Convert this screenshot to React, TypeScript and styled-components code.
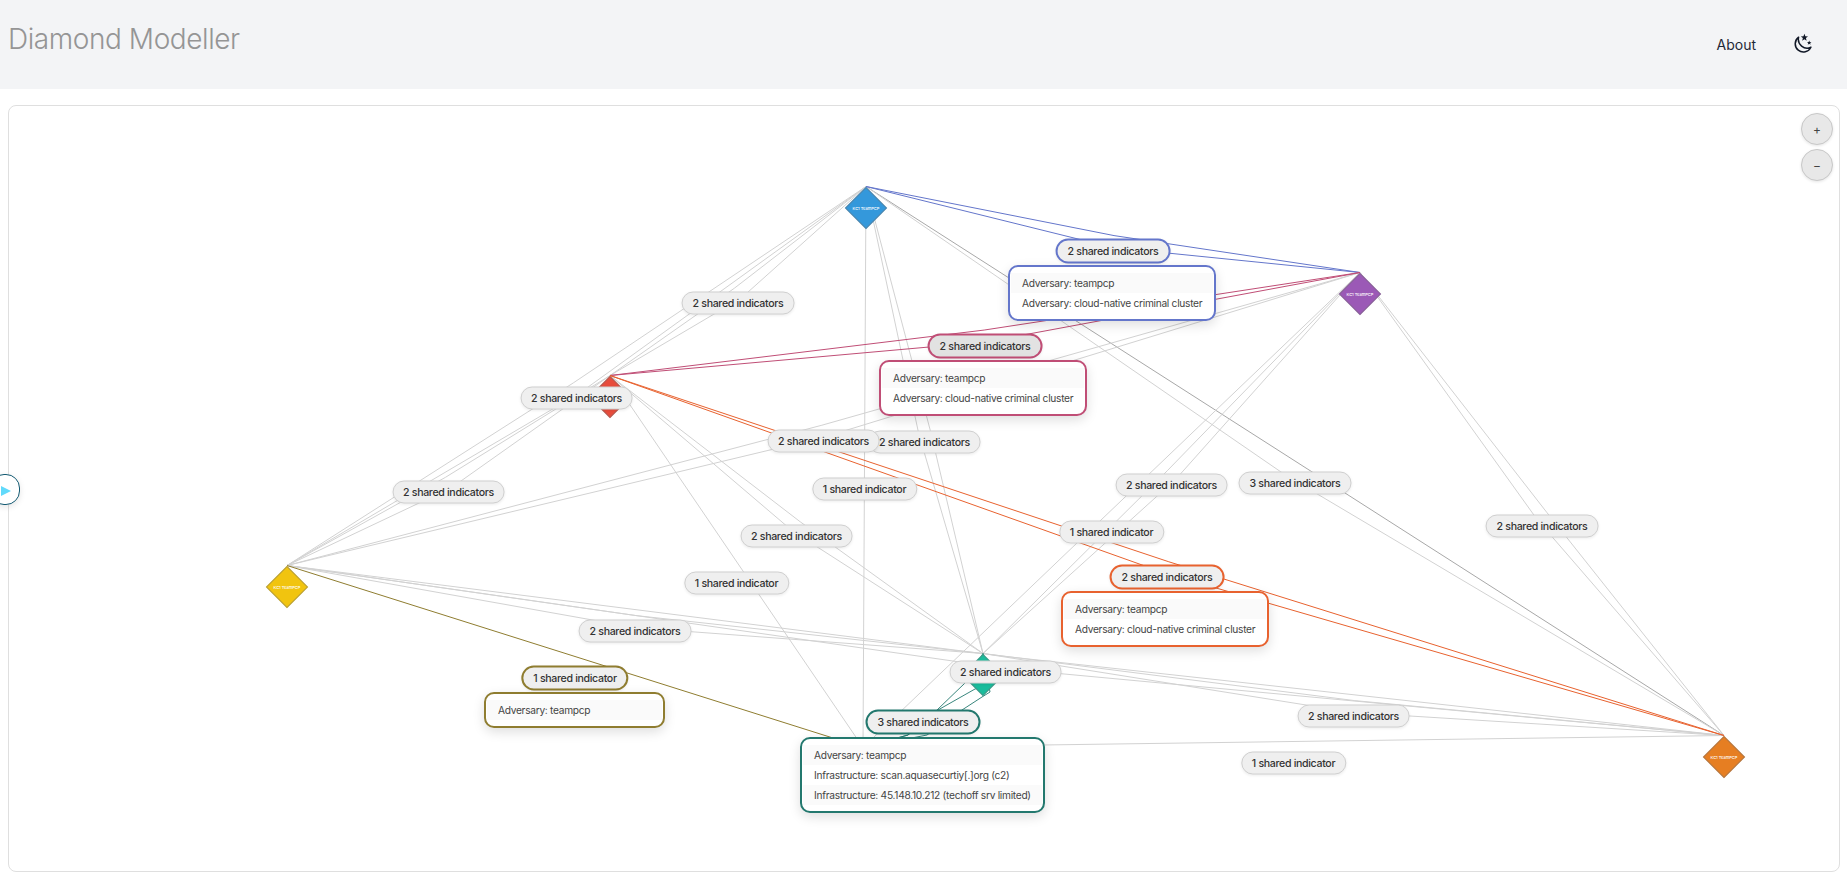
import React from "react";
import styled, { createGlobalStyle } from "styled-components";

const ORIGIN = { x: 8, y: 105 };
const HALF = 21.5;

type Pt = { x: number; y: number };
type NodeDef = { id: string; x: number; y: number; color: string };
type EdgeDef = { from: string; to: string; count: number; tone?: string; rows?: string[]; card?: Pt };

const nodes: NodeDef[] = [
  { id: "x", x: 863, y: 769, color: "#2ecc71" },
  { id: "blue", x: 866, y: 208, color: "#3498db" },
  { id: "purple", x: 1360, y: 294, color: "#9b59b6" },
  { id: "red", x: 610, y: 397, color: "#e74c3c" },
  { id: "yellow", x: 287, y: 587, color: "#f1c40f" },
  { id: "green", x: 983, y: 675, color: "#1abc9c" },
  { id: "orange", x: 1724, y: 757, color: "#e67e22" },
];

const T = "Adversary: teampcp";
const C = "Adversary: cloud-native criminal cluster";

const edges: EdgeDef[] = [
  { from: "blue", to: "red", count: 2 },
  { from: "blue", to: "yellow", count: 2 },
  { from: "blue", to: "green", count: 2 },
  { from: "blue", to: "orange", count: 3 },
  { from: "blue", to: "x", count: 1 },
  { from: "purple", to: "yellow", count: 2 },
  { from: "purple", to: "green", count: 2 },
  { from: "purple", to: "orange", count: 2 },
  { from: "purple", to: "x", count: 1 },
  { from: "red", to: "yellow", count: 2 },
  { from: "red", to: "green", count: 2 },
  { from: "red", to: "x", count: 1 },
  { from: "yellow", to: "green", count: 2 },
  { from: "yellow", to: "orange", count: 2 },
  { from: "green", to: "orange", count: 2 },
  { from: "orange", to: "x", count: 1 },
  { from: "blue", to: "purple", count: 2, tone: "#6476cb", rows: [T, C], card: { x: 1008, y: 265 } },
  { from: "purple", to: "red", count: 2, tone: "#c04e76", rows: [T, C], card: { x: 879, y: 360 } },
  { from: "red", to: "orange", count: 2, tone: "#e8622f", rows: [T, C], card: { x: 1061, y: 591 } },
  { from: "yellow", to: "x", count: 1, tone: "#8f7d30", rows: [T], card: { x: 484, y: 692 } },
  {
    from: "green",
    to: "x",
    count: 3,
    tone: "#23786e",
    rows: [T, "Infrastructure: scan.aquasecurtiy[.]org (c2)", "Infrastructure: 45.148.10.212 (techoff srv limited)"],
    card: { x: 800, y: 737 },
  },
];

const byId = (id: string) => nodes.find((n) => n.id === id)!;
const top = (n: NodeDef): Pt => ({ x: n.x, y: n.y - HALF });

const poly = (pts: Pt[]) => pts.map((p) => `${p.x - ORIGIN.x},${p.y - ORIGIN.y}`).join(" ");

/* Lines of one edge: a single indicator runs straight, several bow apart around a shifted midpoint. */
function linesFor(e: EdgeDef): { pts: Pt[]; stroke: string; width: number }[] {
  const a = top(byId(e.from));
  const b = top(byId(e.to));
  const base = e.tone ?? "#d2d2d2";
  if (e.from === "green" && e.to === "x") {
    return [
      [a, { x: 965, y: 683 }, { x: 937, y: 710 }, { x: 908, y: 735 }, b],
      [a, { x: 992, y: 684 }, { x: 975, y: 689 }, { x: 938, y: 710 }, { x: 908, y: 735 }, b],
      [a, { x: 990, y: 692 }, { x: 982, y: 697 }, { x: 962, y: 710 }, { x: 927, y: 735 }, b],
    ].map((pts) => ({ pts, stroke: base, width: 0.9 }));
  }
  if (e.count === 1) return [{ pts: [a, b], stroke: base, width: 1 }];
  const mx = (a.x + b.x) / 2;
  const my = (a.y + b.y) / 2 + 12;
  const dx = b.x - a.x;
  const dy = b.y - a.y;
  const len = Math.hypot(dx, dy);
  const nx = -dy / len;
  const ny = dx / len;
  if (e.count === 3) {
    return [
      { pts: [a, b], stroke: "#a8a8a8", width: 1 },
      { pts: [a, { x: (a.x + b.x) / 2 + nx * 17, y: (a.y + b.y) / 2 + ny * 17 }, b], stroke: base, width: 1 },
    ];
  }
  return [6, -6].map((k) => ({
    pts: [a, { x: mx + nx * k, y: my + ny * k }, b],
    stroke: base,
    width: 1,
  }));
}

const GlobalStyle = createGlobalStyle`
  html, body { margin: 0; height: 100%; background: #fff; overflow: hidden; }
  body { font-family: Inter, "Noto Sans", "Liberation Sans", sans-serif; }
`;

const Page = styled.div`
  position: relative;
  width: 1847px;
  height: 881px;
  display: flex;
  flex-direction: column;
`;

const Header = styled.header`
  height: 89px;
  flex: none;
  background: #f3f4f6;
  display: flex;
  align-items: flex-start;
  justify-content: space-between;
  padding: 0 35px 0 8px;
  box-sizing: border-box;
`;

const Title = styled.h1`
  margin: 21px 0 0;
  font-size: 28px;
  line-height: 36px;
  font-weight: 300;
  letter-spacing: -0.43px;
  color: #959595;
`;

const Nav = styled.nav`
  display: flex;
  align-items: center;
  gap: 38px;
  height: 86px;
`;

const NavLink = styled.a`
  font-size: 14px;
  font-weight: 400;
  margin-top: 2px;
  color: #1f2937;
`;

const ThemeButton = styled.button`
  border: 0;
  background: none;
  padding: 0;
  display: flex;
  color: #111827;
  margin-top: -1px;
`;

const Main = styled.main`
  flex: 1;
  padding: 16px 7px 9px 8px;
  min-height: 0;
  display: flex;
`;

const SideToggle = styled.button`
  position: absolute;
  left: -10px;
  top: 474px;
  width: 30px;
  height: 31px;
  border-radius: 14px;
  border: 1.5px solid #135a72;
  background: #fff;
  box-shadow: 0 2px 6px rgba(0, 0, 0, 0.1);
  padding: 0;

  &::after {
    content: "";
    position: absolute;
    left: 10px;
    top: 11px;
    border-style: solid;
    border-width: 5.5px 0 5.5px 10px;
    border-color: transparent transparent transparent #61dafb;
  }
`;

const Canvas = styled.section`
  position: relative;
  flex: 1;
  border: 1px solid #dfdfdf;
  border-radius: 8px;
  box-sizing: border-box;
`;

const EdgeLayer = styled.svg`
  position: absolute;
  left: -1px;
  top: -1px;
  width: 1832px;
  height: 767px;
  overflow: hidden;
`;

const Diamond = styled.div.attrs<{ $x: number; $y: number; $fill: string }>((p) => ({
  style: { left: p.$x - ORIGIN.x - 1, top: p.$y - ORIGIN.y - 1, background: p.$fill },
}))<{ $x: number; $y: number; $fill: string }>`
  position: absolute;
  width: 30px;
  height: 30px;
  margin: -15px 0 0 -15px;
  transform: rotate(45deg);
  outline: 1px solid rgba(110, 110, 110, 0.45);
  outline-offset: -1px;
  display: flex;
  align-items: center;
  justify-content: center;
`;

const DiamondLabel = styled.span`
  transform: rotate(-45deg);
  color: #fff;
  font-size: 4px;
  font-weight: 500;
  white-space: nowrap;
`;

const Pill = styled.div.attrs<{ $x: number; $y: number; $tone?: string; $shade?: boolean }>((p) => ({
  style: { left: p.$x - ORIGIN.x - 1, top: p.$y - ORIGIN.y - 1 },
}))<{ $x: number; $y: number; $tone?: string; $shade?: boolean }>`
  position: absolute;
  transform: translate(-50%, -50%);
  box-sizing: border-box;
  height: ${(p) => (p.$tone ? 25 : 23)}px;
  padding: 0 10px;
  border: ${(p) => (p.$tone ? `2px solid ${p.$tone}` : "1px solid #d0d0d0")};
  border-radius: 13px;
  background: ${(p) => (p.$shade ? "#e2e2e2" : "#efefef")};
  box-shadow: 0 1px 3px rgba(0, 0, 0, 0.08);
  color: #333;
  font-size: 10.6px;
  font-weight: 500;
  letter-spacing: -0.33px;
  white-space: nowrap;
  display: flex;
  align-items: center;
`;

const Card = styled.div.attrs<{ $x: number; $y: number; $tone: string }>((p) => ({
  style: { left: p.$x - ORIGIN.x - 1, top: p.$y - ORIGIN.y - 1, borderColor: p.$tone },
}))<{ $x: number; $y: number; $tone: string }>`
  position: absolute;
  box-sizing: border-box;
  min-width: 181px;
  padding: 6px 1px;
  border: 2px solid;
  border-radius: 10px;
  background: #fff;
  box-shadow: 0 4px 12px rgba(0, 0, 0, 0.13);
`;

const CardRow = styled.div`
  height: 20px;
  padding: 0 11px;
  font-size: 10.2px;
  line-height: 21px;
  letter-spacing: -0.29px;
  color: #444;
  white-space: nowrap;

  &:nth-child(odd) {
    background: #fafafa;
  }
`;

const ZoomStack = styled.div`
  position: absolute;
  top: 7px;
  right: 6px;
  display: flex;
  flex-direction: column;
  gap: 4px;
`;

const ZoomButton = styled.button`
  width: 32px;
  height: 32px;
  padding: 0;
  border-radius: 50%;
  border: 1px solid #c8c8c8;
  background: #e8e8e8;
  color: #444;
  font-size: 12px;
  font-family: inherit;
  box-shadow: 0 1px 3px rgba(0, 0, 0, 0.1);
`;

const labelOf = (e: EdgeDef) => `${e.count} shared indicator${e.count > 1 ? "s" : ""}`;

function starPoints(cx: number, cy: number, r: number) {
  return Array.from({ length: 10 }, (_, i) => {
    const rad = i % 2 ? r * 0.42 : r;
    const t = -Math.PI / 2 + (i * Math.PI) / 5;
    return `${cx + rad * Math.cos(t)},${cy + rad * Math.sin(t)}`;
  }).join(" ");
}

const MoonIcon = () => (
  <svg width="18" height="20" viewBox="0 0 18 20" fill="none">
    <path
      d="M4.6 4.2A8.2 8.2 0 1 0 16.9 14.2A8.8 8.8 0 0 1 4.6 4.2Z"
      stroke="currentColor"
      strokeWidth="1.5"
      strokeLinejoin="round"
    />
    <polygon points={starPoints(10.4, 4.6, 3.8)} fill="currentColor" />
    <polygon points={starPoints(15.2, 9.8, 2.4)} fill="currentColor" />
  </svg>
);

export default function App() {
  return (
    <Page>
      <GlobalStyle />
      <Header>
        <Title>Diamond Modeller</Title>
        <Nav>
          <NavLink>About</NavLink>
          <ThemeButton aria-label="Toggle theme">
            <MoonIcon />
          </ThemeButton>
        </Nav>
      </Header>
      <Main>
        <Canvas>
          <EdgeLayer viewBox="0 0 1832 767">
            {edges.flatMap((e, i) =>
              linesFor(e).map((l, j) => (
                <polyline key={`${i}-${j}`} points={poly(l.pts)} fill="none" stroke={l.stroke} strokeWidth={l.width} />
              ))
            )}
          </EdgeLayer>
          {nodes.map((n) => (
            <Diamond key={n.id} $x={n.x} $y={n.y} $fill={n.color}>
              <DiamondLabel>KC1 TeamPCP</DiamondLabel>
            </Diamond>
          ))}
          {edges.map((e) => {
            const a = byId(e.from);
            const b = byId(e.to);
            return (
              <Pill
                key={`${e.from}-${e.to}`}
                $x={(a.x + b.x) / 2}
                $y={(a.y + b.y) / 2}
                $tone={e.tone}
                $shade={e.from === "purple" && e.to === "red"}
              >
                {labelOf(e)}
              </Pill>
            );
          })}
          {edges
            .filter((e) => e.card)
            .map((e) => (
              <Card key={`card-${e.from}-${e.to}`} $x={e.card!.x} $y={e.card!.y} $tone={e.tone!}>
                {e.rows!.map((r) => (
                  <CardRow key={r}>{r}</CardRow>
                ))}
              </Card>
            ))}
          <ZoomStack>
            <ZoomButton aria-label="Zoom in">+</ZoomButton>
            <ZoomButton aria-label="Zoom out">−</ZoomButton>
          </ZoomStack>
        </Canvas>
      </Main>
      <SideToggle aria-label="Open panel" />
    </Page>
  );
}
